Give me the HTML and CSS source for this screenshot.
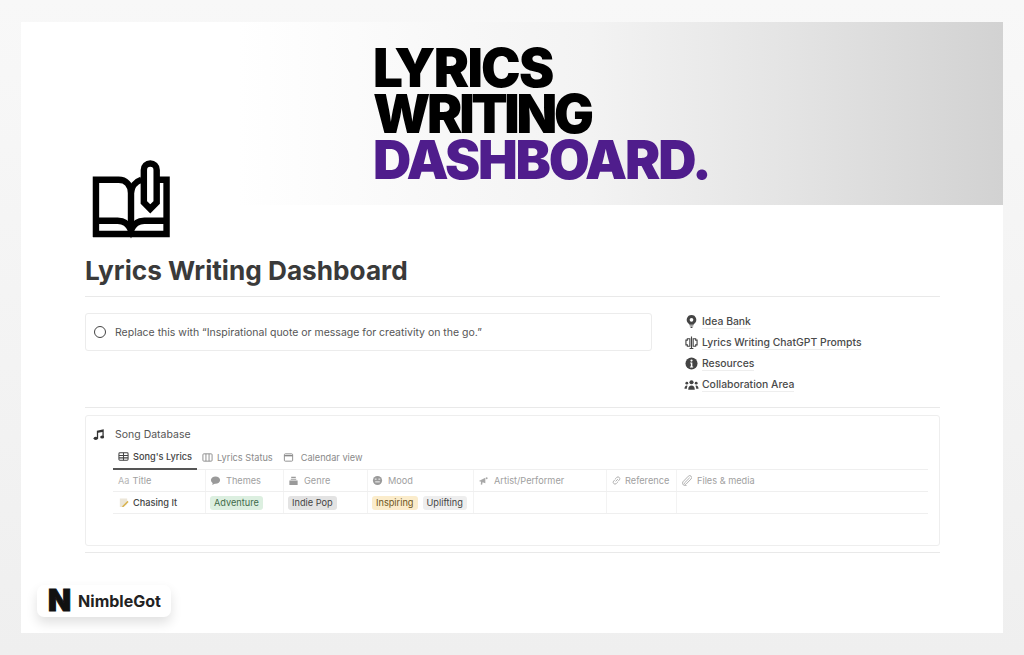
FILE: index.html
```html
<!DOCTYPE html>
<html lang="en">
<head>
  <meta charset="UTF-8" />
  <meta name="viewport" content="width=device-width, initial-scale=1.0"/>
  <title>Lyrics Writing Dashboard</title>
  <link rel="stylesheet" href="styles.css">
</head>
<body>

<div class="card">
  <div class="banner">
    <div class="banner-title">
      <div class="line-one">LYRICS</div>
      <div class="line-two">WRITING</div>
      <div class="line-three">DASHBOARD.</div>
    </div>
  </div>

  <div class="content">
    <svg class="page-icon" viewBox="0 0 80 80" fill="none" stroke="#000" stroke-width="6.5">
      <path d="M4 78V20H27C34 20 39 25 39.500 33V74"/>
      <path d="M39.500 33C40 27 44 22 50 20"/>
      <path d="M67 20H75.500V75H1"/>
      <path d="M4 61.500H26C32 61.500 37 65 39.500 71C42 65 47 61.500 53 61.500H75"/>
      <path d="M52.500 43V10A6.500 6.500 0 0 1 65.500 10V43L59 49.500Z" fill="#fff"/>
    </svg>

    <h1 class="page-title">Lyrics Writing Dashboard</h1>
    <div class="divider first"></div>

    <div class="columns">
      <div class="callout">
        <span class="circle"></span>
        <span>Replace this with “Inspirational quote or message for creativity on the go.”</span>
      </div>
      <div class="links">
        <div class="link">
          <svg viewBox="0 0 14 14" fill="#444"><path d="M7 0a5.200 5.200 0 0 0-3 9.400c.5.400.7.800.7 1.200h4.600c0-.4.200-.8.700-1.200A5.200 5.200 0 0 0 7 0zm0 3.200a2 2 0 1 1 0 4 2 2 0 0 1 0-4z"/><path d="M5 11.200h4v1H5zM6 12.700h2V14H6z"/></svg>
          <span>Idea Bank</span>
        </div>
        <div class="link">
          <svg viewBox="0 0 14 14" fill="none" stroke="#444" stroke-width="1.200"><path d="M7 .5v13M5 13.500h4M5.200 3H2.500v1.500H1v5h1.500V11h2.700zM8.800 3h2.700v1.500H13v5h-1.500V11H8.800z"/></svg>
          <span>Lyrics Writing ChatGPT Prompts</span>
        </div>
        <div class="link">
          <svg viewBox="0 0 14 14"><circle cx="7" cy="7" r="6.500" fill="#444"/><circle cx="7" cy="3.800" r="1.200" fill="#fff"/><path d="M5.600 6h2.300v4.200h.9v1H5.300v-1h1V7h-.7z" fill="#fff"/></svg>
          <span>Resources</span>
        </div>
        <div class="link">
          <svg class="wide" viewBox="0 0 16 12" fill="#444"><circle cx="8" cy="3" r="2.200"/><circle cx="3" cy="4" r="1.500"/><circle cx="13" cy="4" r="1.500"/><path d="M4.500 11c0-3 1.500-4.500 3.500-4.500s3.500 1.500 3.500 4.500zM.5 10c0-2 1-3.500 2.500-3.500l.8.200C3.200 7.800 3 9 3 10zM15.500 10c0-2-1-3.500-2.500-3.500l-.8.200c.6 1.100.8 2.300.8 3.300z"/></svg>
          <span>Collaboration Area</span>
        </div>
      </div>
    </div>

    <div class="divider"></div>

    <div class="database">
      <div class="db-title">
        <svg viewBox="0 0 14 14" fill="#333"><path d="M4.500 2.500 12.500 1v9h-1.500V4L6 5v7H4.500z"/><ellipse cx="3.200" cy="11.500" rx="2.500" ry="1.900"/><ellipse cx="10.700" cy="10" rx="2.300" ry="1.800"/></svg>
        <span>Song Database</span>
      </div>

      <div class="tabs">
        <div class="tab active">
          <svg viewBox="0 0 12 12" fill="none" stroke="#444" stroke-width="1.100"><rect x="1" y="2" width="10" height="8" rx="1"/><path d="M1 5h10M1 7.500h10M6 2v8"/></svg>
          Song's Lyrics
        </div>
        <div class="tab">
          <svg viewBox="0 0 12 12" fill="none" stroke="#8a8a8a" stroke-width="1"><rect x="1" y="2" width="10" height="8" rx="1"/><path d="M4.300 2v8M7.700 2v8"/></svg>
          Lyrics Status
        </div>
        <div class="tab calendar">
          <svg viewBox="0 0 12 12" fill="none" stroke="#8a8a8a" stroke-width="1"><rect x="1.500" y="2" width="9" height="8" rx="1"/><path d="M1.500 4h9" stroke-width="1.500"/></svg>
          Calendar view
        </div>
      </div>

      <div class="table">
        <div class="row head">
          <div class="cell"><span class="aa">Aa</span>Title</div>
          <div class="cell">
            <svg viewBox="0 0 12 12" fill="#9a9a9a"><ellipse cx="6" cy="5.500" rx="5" ry="4"/><path d="M3 8.500 2.500 11 6 9z"/></svg>
            Themes
          </div>
          <div class="cell">
            <svg viewBox="0 0 12 12" fill="#9a9a9a"><path d="M1.500 6h9v5h-9zM3 4h6v1.200H3zM3.500 2h5v1.200h-5z"/></svg>
            Genre
          </div>
          <div class="cell">
            <svg viewBox="0 0 12 12"><circle cx="6" cy="6" r="5" fill="#9a9a9a"/><path d="M3 4.500h2M7 4.500h2M3.500 7.500h5" stroke="#fff" fill="none"/></svg>
            Mood
          </div>
          <div class="cell">
            <svg viewBox="0 0 12 12" fill="#a8a8a8"><path d="M1 6.500 8 3v6L5 7.800 4.500 10.500 3 10.300l.3-3zM9.500 2.500a1 1 0 1 1 0 2 1 1 0 0 1 0-2z"/></svg>
            Artist/Performer
          </div>
          <div class="cell tight">
            <svg viewBox="0 0 12 12" fill="none" stroke="#a8a8a8" stroke-width="1"><path d="M5 7 7.500 4.500M4.500 5 2.800 6.700a2 2 0 0 0 2.800 2.800L7.300 7.800M7.500 7l1.700-1.700a2 2 0 0 0-2.800-2.800L4.700 4.200"/></svg>
            Reference
          </div>
          <div class="cell">
            <svg viewBox="0 0 12 12" fill="none" stroke="#a8a8a8" stroke-width="1"><path d="M9.500 3 4 8.500a1 1 0 0 0 1.500 1.500L11 4.300a2 2 0 0 0-3-3L2 7.500a3 3 0 0 0 4 4"/></svg>
            Files &amp; media
          </div>
        </div>
        <div class="row">
          <div class="cell name">
            <svg viewBox="0 0 12 12"><path d="M2 1.500h8v6L6 11H2z" fill="#ece6d8"/><path d="M4 10.500 10.500 4 11.500 5.500 6 11z" fill="#d9b24c"/></svg>
            Chasing It
          </div>
          <div class="cell"><span class="tag green">Adventure</span></div>
          <div class="cell"><span class="tag gray">Indie Pop</span></div>
          <div class="cell"><span class="tag yellow">Inspiring</span><span class="tag light">Uplifting</span></div>
          <div class="cell"></div>
          <div class="cell"></div>
          <div class="cell"></div>
        </div>
      </div>
    </div>

    <div class="divider last"></div>
  </div>

  <div class="badge">
    <span class="badge-logo">N</span>
    <span class="badge-name">NimbleGot</span>
  </div>
</div>

</body>
</html>
```

FILE: styles.css
```css
* {
  box-sizing: border-box;
}

html, body {
  height: 100%;
}

body {
  margin: 0;
  padding: 22px 21px;
  overflow: hidden;
  background: linear-gradient(180deg, #f8f8f8, #efefef);
  font-family: Inter, "Liberation Sans", sans-serif;
  color: #444;
}

.card {
  position: relative;
  width: 982px;
  height: 611px;
  background-color: #fff;
}

.banner {
  height: 183px;
  padding: 23px 0 0 352px;
  background: linear-gradient(90deg, #fff 22%, #f3f3f3 58%, #e4e4e4 78%, #d2d2d2 100%);
}

.banner-title {
  font-size: 53px;
  font-weight: 900;
  line-height: 46px;
  color: #000;
}

.line-one {
  letter-spacing: -1.700px;
}

.line-two {
  letter-spacing: -3.300px;
}

.line-three {
  letter-spacing: -2.200px;
  color: #4f1d8c;
}

.content {
  padding: 0 63px 0 64px;
}

.page-icon {
  display: block;
  width: 79px;
  height: 79px;
  margin: -45px 0 0 7px;
}

.page-title {
  margin: 16px 0 0;
  font-size: 26.200px;
  line-height: 32px;
  font-weight: 700;
  color: #3a3a3a;
}

.divider {
  height: 1px;
  margin-top: 12px;
  background-color: #e9e9e9;
}

.divider.first {
  margin-top: 9px;
}

.divider.last {
  margin-top: 6px;
}

.columns {
  display: flex;
  justify-content: space-between;
  padding-top: 14px;
}

.callout {
  display: flex;
  align-items: center;
  gap: 9px;
  width: 567px;
  height: 38px;
  margin-top: 2px;
  padding-left: 8px;
  border: 1px solid #ececec;
  border-radius: 3px;
  font-size: 10.500px;
  color: #555;
}

.circle {
  width: 12px;
  height: 12px;
  border: 1.500px solid #444;
  border-radius: 50%;
}

.links {
  width: 255px;
  font-size: 10.400px;
  font-weight: 500;
  color: #4a4a4a;
}

.link {
  display: flex;
  align-items: center;
  gap: 4px;
  height: 21px;
}

.link svg {
  width: 13px;
  height: 13px;
}

.link svg.wide {
  width: 15px;
  height: 12px;
  margin: 0 -1px 0 -1px;
}

.link span {
  border-bottom: 1px solid #eee;
}

.database {
  height: 131px;
  margin-top: 7px;
  padding: 10px 11px 0 27px;
  border: 1px solid #eee;
  border-radius: 3px;
}

.db-title {
  display: flex;
  align-items: center;
  gap: 10px;
  height: 17px;
  margin-left: -20px;
  font-size: 10.500px;
  color: #555;
}

.db-title svg {
  width: 12px;
  height: 13px;
}

.tabs {
  display: flex;
  gap: 5px;
  margin-top: 2px;
  height: 25px;
  font-size: 9.200px;
  color: #8a8a8a;
}

.tab {
  display: flex;
  align-items: center;
  gap: 4px;
  padding: 0 5px;
  margin-right: -5px;
}

.tab svg {
  width: 11px;
  height: 11px;
}

.tab.calendar {
  gap: 7px;
}

.tab.active {
  border-bottom: 2px solid #555;
  font-weight: 500;
  color: #444;
}

.table {
  margin-top: -1px;
  border-top: 1px solid #efefef;
  font-size: 9.200px;
}

.row {
  display: grid;
  grid-template-columns: 92px 78px 84px 106px 133px 70px 1fr;
  height: 22px;
  border-bottom: 1px solid #efefef;
}

.cell {
  display: flex;
  align-items: center;
  gap: 5px;
  padding-left: 4px;
  border-left: 1px solid #f3f3f3;
  white-space: nowrap;
}

.cell:first-child {
  border-left: 0;
  padding-left: 5px;
  gap: 4px;
}

.cell.tight {
  gap: 3px;
}

.cell svg {
  width: 11px;
  height: 11px;
}

.head .cell {
  color: #a0a0a0;
}

.aa {
  margin-right: -1px;
  color: #b5b5b5;
}

.name {
  font-weight: 500;
  color: #444;
}

.tag {
  padding: 1px 4px;
  border-radius: 3px;
  line-height: 12px;
  color: #444;
}

.green {
  background-color: #dcefe0;
  color: #3f6b4a;
}

.gray {
  background-color: #e3e3e3;
}

.yellow {
  background-color: #fbeccb;
  color: #6d5520;
}

.light {
  background-color: #eeeeee;
}

.badge {
  position: absolute;
  left: 16px;
  top: 563px;
  display: flex;
  align-items: center;
  gap: 7px;
  width: 134px;
  height: 32px;
  padding-left: 11px;
  background-color: #fff;
  border-radius: 7px;
  box-shadow: 0 6px 12px rgba(0, 0, 0, 0.12);
}

.badge-logo {
  font-size: 30px;
  font-weight: 900;
  line-height: 32px;
  padding-bottom: 2px;
  color: #111;
  -webkit-text-stroke: 1px #111;
}

.badge-name {
  font-size: 16px;
  font-weight: 700;
  color: #222;
}
```
